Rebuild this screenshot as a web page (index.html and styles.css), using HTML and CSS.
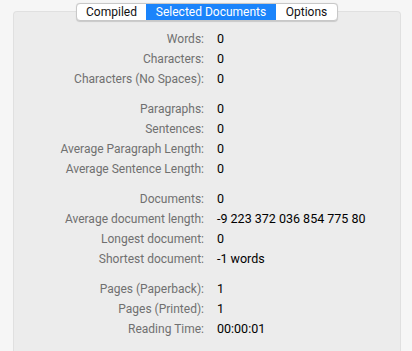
FILE: index.html
```html
<!DOCTYPE html>
<html lang="en">
<head>
  <meta charset="UTF-8" />
  <title>Statistics</title>
  <link rel="stylesheet" href="styles.css">
</head>
<body>
  <div class="tabs">
    <div class="tab">Compiled</div>
    <div class="tab active">Selected Documents</div>
    <div class="tab">Options</div>
  </div>

  <div class="panel">
    <div class="group">
      <div class="label">Words:</div><div class="value">0</div>
      <div class="label">Characters:</div><div class="value">0</div>
      <div class="label">Characters (No Spaces):</div><div class="value">0</div>
    </div>
    <div class="group">
      <div class="label">Paragraphs:</div><div class="value">0</div>
      <div class="label">Sentences:</div><div class="value">0</div>
      <div class="label">Average Paragraph Length:</div><div class="value">0</div>
      <div class="label">Average Sentence Length:</div><div class="value">0</div>
    </div>
    <div class="group">
      <div class="label">Documents:</div><div class="value">0</div>
      <div class="label">Average document length:</div><div class="value">-9 223 372 036 854 775 80</div>
      <div class="label">Longest document:</div><div class="value">0</div>
      <div class="label">Shortest document:</div><div class="value">-1 words</div>
    </div>
    <div class="group">
      <div class="label">Pages (Paperback):</div><div class="value">1</div>
      <div class="label">Pages (Printed):</div><div class="value">1</div>
      <div class="label">Reading Time:</div><div class="value">00:00:01</div>
    </div>
  </div>
</body>
</html>
```

FILE: styles.css
```css
body {
  margin: 0;
  background: #f6f6f6;
  font-family: Roboto, "Liberation Sans", sans-serif;
  font-size: 12px;
  color: #000;
  height: 351px;
  overflow: hidden;
}

.tabs {
  position: relative;
  z-index: 1;
  display: flex;
  width: 262px;
  height: 18px;
  margin: 3px 0 0 76px;
  background: #fff;
  border: 1px solid #c8c8c8;
  border-radius: 4px;
  box-sizing: border-box;
  overflow: hidden;
  box-shadow: 0 0.5px 1px rgba(0, 0, 0, 0.15);
}

.tab {
  line-height: 16px;
  text-align: center;
  color: #111;
}

.tab:nth-child(1) { width: 69px; }
.tab:nth-child(2) { width: 130px; }
.tab:nth-child(3) { width: 61px; }

.tab.active {
  background: #1b84fb;
  color: #fff;
}

.panel {
  margin: -10px 11px 0 13px;
  padding-top: 17px;
  height: 322px;
  background: #ececec;
  border: 1px solid #e0e0e0;
  border-bottom: none;
  border-radius: 4px 4px 0 0;
}

.group {
  display: grid;
  grid-template-columns: 190px auto;
  column-gap: 13px;
  line-height: 20px;
  margin-bottom: 10px;
}

.label {
  text-align: right;
  color: #707070;
}

.value {
  color: #000;
  font-size: 12.5px;
}
```
